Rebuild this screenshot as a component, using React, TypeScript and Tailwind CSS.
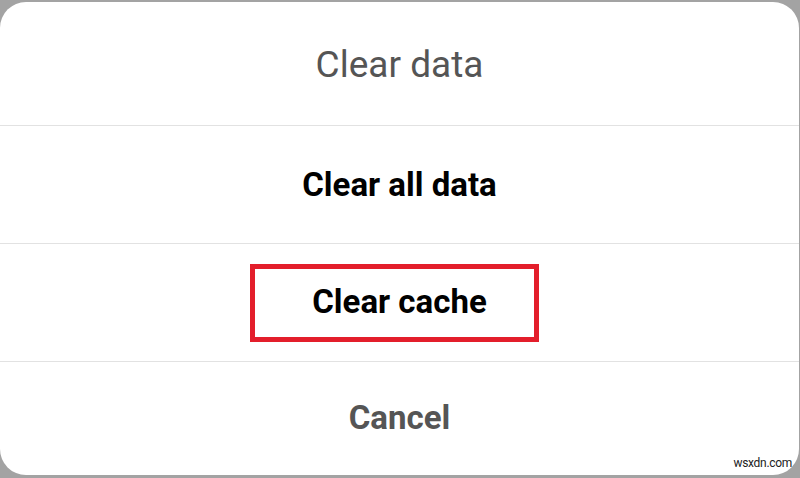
export default function App() {
  return (
    <div className="w-[800px] h-[478px] bg-[#a3a3a3] pt-[2px] pb-[3px] overflow-hidden" style={{ fontFamily: "Roboto, 'Liberation Sans', sans-serif" }}>
      <div className="relative h-full w-[799px] bg-white rounded-[26px] flex flex-col">
        <div className="h-[123px] flex items-center justify-center text-[#555555] text-[37px] pt-[2px]">Clear data</div>
        <div className="h-[1px] bg-[#e2e2e2]" />
        <div className="h-[117px] flex items-center justify-center text-black font-bold text-[33px]">Clear all data</div>
        <div className="h-[1px] bg-[#e2e2e2]" />
        <div className="h-[117px] flex items-center justify-center pr-[11px]">
          <div className="w-[289px] h-[78px] border-[5px] border-[#e31e2b] flex items-center justify-center text-black font-bold text-[33px] pb-[2px] pl-[11px]">Clear cache</div>
        </div>
        <div className="h-[1px] bg-[#e2e2e2]" />
        <div className="flex-1 flex items-center justify-center text-[#555555] font-bold text-[33px] pb-[2px]">Cancel</div>
        <div className="absolute right-[7px] bottom-[3px] text-[12px] text-[#222] tracking-tight">wsxdn.com</div>
      </div>
    </div>
  );
}
